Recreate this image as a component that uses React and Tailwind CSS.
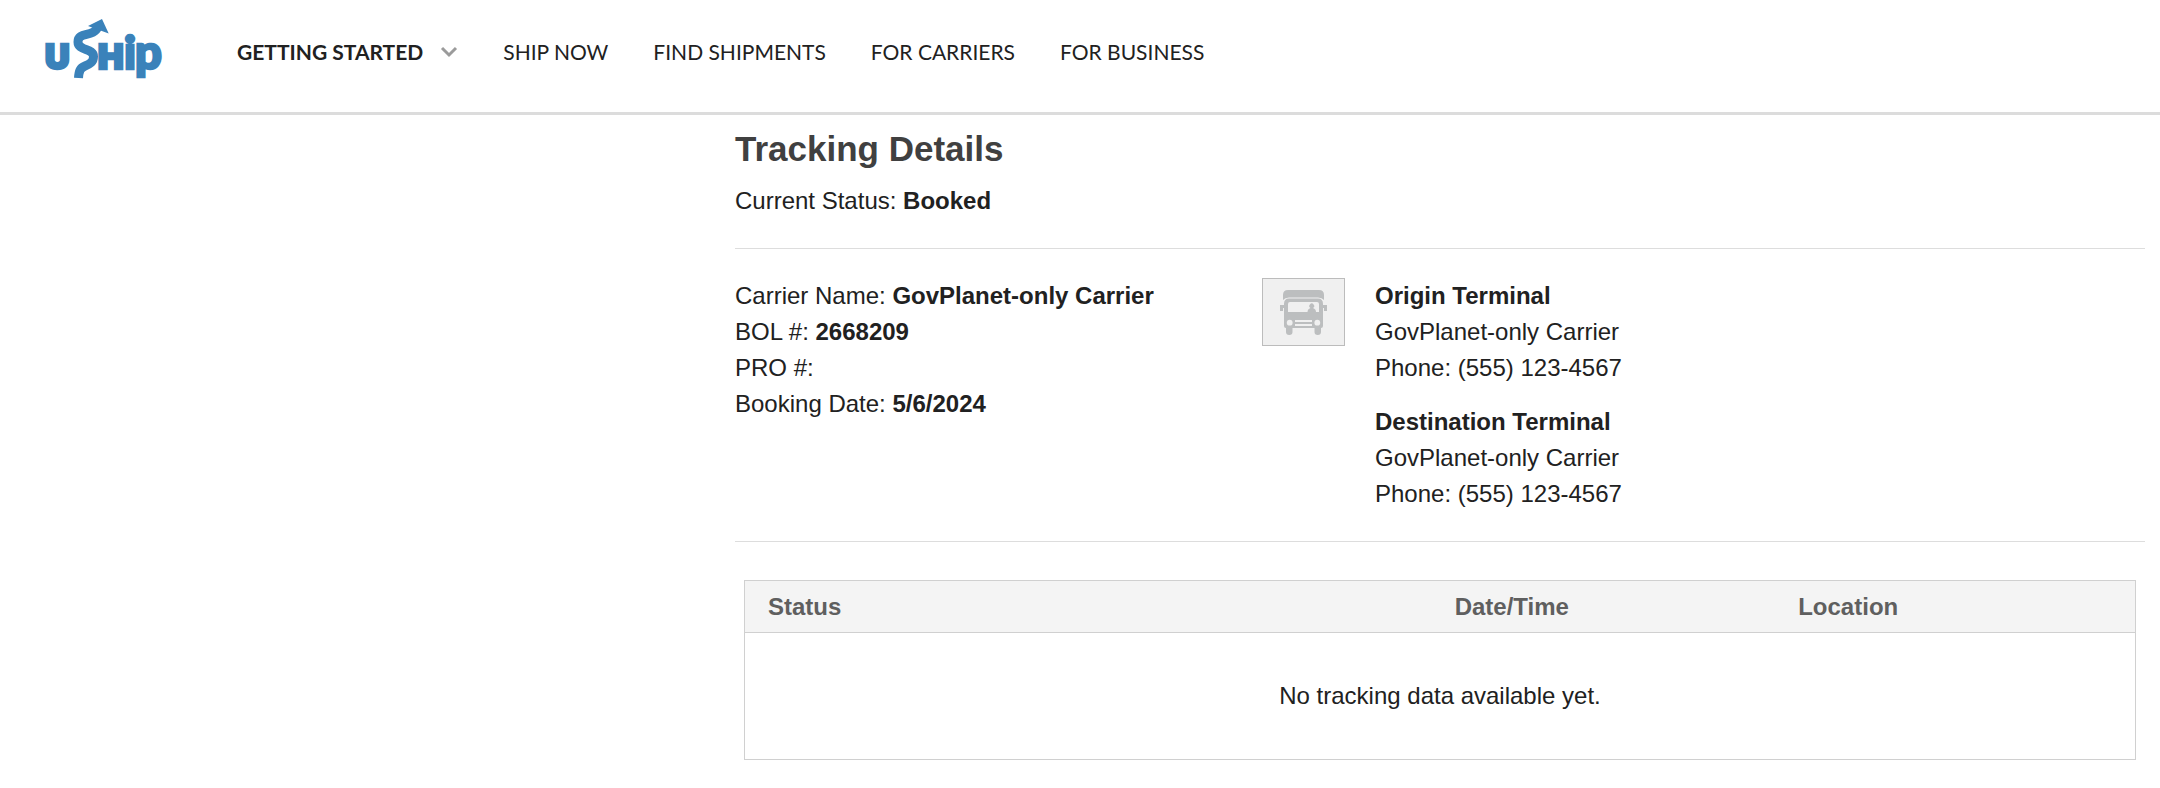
import React from "react";

const links = ["SHIP NOW", "FIND SHIPMENTS", "FOR CARRIERS", "FOR BUSINESS"];

const details = [
  ["Carrier Name:", "GovPlanet-only Carrier"],
  ["BOL #:", "2668209"],
  ["PRO #:", ""],
  ["Booking Date:", "5/6/2024"],
];

const terminals = ["Origin Terminal", "Destination Terminal"];

function Logo() {
  return (
    <svg
      width="120"
      height="64"
      viewBox="0 0 120 64"
      fill="#3a82ba"
      stroke="#3a82ba"
      className="font-['Lato',sans-serif] font-black"
      role="img"
      aria-label="uShip"
    >
      <g strokeWidth="2.6">
        <text x="1" y="53" fontSize="34" className="font-['Inter',sans-serif]">U</text>
        <text x="54" y="53" fontSize="34" className="font-['Inter',sans-serif]">H</text>
        <text x="80" y="53" fontSize="46">i</text>
        <text x="91" y="53" fontSize="47">p</text>
      </g>
      <path
        d="M34.500 62C35 55 36 52 41 50C46 48 49.500 46 49.500 40.500C49.500 32 34 35 34 26C34 15 49 22 54 11"
        fill="none"
        strokeWidth="9"
      />
      <path d="M44 10L58 3L64.700 17.500Z" stroke="none" />
    </svg>
  );
}

function TruckIcon() {
  return (
    <svg width="47" height="47" viewBox="0 0 47 47" fill="#bcbebf" aria-hidden="true">
      <path d="M3 11V6Q3 1 8 1H39Q44 1 44 6V11Q42 8.500 38 8.500H9Q5 8.500 3 11Z" />
      <path
        fillRule="evenodd"
        d="M9 9.500H38Q43 9.500 43 15V37Q43 39 41 39H6Q4 39 4 37V15Q4 9.500 9 9.500ZM10 13Q8 13 8 15V23H39V15Q39 13 37 13Z"
      />
      <path d="M0 16H4V19H3V22H0ZM43 16H47V22H44V19H43ZM6 38H12.500V43Q12.500 46 9.250 46Q6 46 6 43ZM34.500 38H41V43Q41 46 37.750 46Q34.500 46 34.500 43ZM27.500 23Q27.500 20 30.500 19A2.400 2.400 0 1 1 33 19Q36 20 36 23Z" />
      <path d="M15 32H32M15 36H32" stroke="#f0f0f0" strokeWidth="1.800" />
      <circle cx="9.700" cy="33.700" r="2.900" fill="#f0f0f0" />
      <circle cx="37.300" cy="33.700" r="2.900" fill="#f0f0f0" />
    </svg>
  );
}

export default function App() {
  return (
    <div className="min-h-screen bg-white font-['Liberation_Sans',Arial,sans-serif] text-2xl leading-9 text-[#212121]">
      <header className="flex h-[115px] items-start border-b-3 border-[#dcdcdc] pt-4 pl-11 font-['Lato',sans-serif] text-[21px]">
        <a href="#home" className="block">
          <Logo />
        </a>
        <nav className="ml-[73px] flex items-center gap-[45px] pt-[18px]">
          <button type="button" className="flex items-center gap-[17px] font-bold">
            GETTING STARTED
            <svg width="18" height="12" viewBox="0 0 18 12" fill="none" stroke="#9b9b9b" strokeWidth="3" aria-hidden="true">
              <path d="M2 2L9 9L16 2" />
            </svg>
          </button>
          {links.map((link) => (
            <a key={link} href="#nav">{link}</a>
          ))}
        </nav>
      </header>

      <main className="pt-3.5 pr-[15px] pl-[735px]">
        <h1 className="text-[35px] leading-10 font-bold text-[#404040]">Tracking Details</h1>
        <p className="mt-3.5">
          Current Status: <strong>Booked</strong>
        </p>

        <section className="mt-[29px] flex items-start border-y border-[#dddddd] py-[29px]">
          <div className="w-[527px]">
            {details.map(([label, value]) => (
              <p key={label}>
                {label} <strong>{value}</strong>
              </p>
            ))}
          </div>
          <div className="flex h-17 w-[83px] items-center justify-center border border-[#bcbcbc] bg-[#f0f0f0]">
            <TruckIcon />
          </div>
          <div className="ml-[30px] flex flex-col gap-[18px]">
            {terminals.map((terminal) => (
              <div key={terminal}>
                <h2 className="font-bold">{terminal}</h2>
                <p>GovPlanet-only Carrier</p>
                <p>Phone: (555) 123-4567</p>
              </div>
            ))}
          </div>
        </section>

        <div className="px-[9px] pt-[38px] pb-7">
          <table className="w-full table-fixed border-collapse border border-[#d0d0d0]">
            <thead>
              <tr className="border-b border-[#d0d0d0] bg-[#f4f4f4] text-left text-[#5f5f5f]">
                <th className="w-[49.4%] px-[23px] pt-2 pb-[7px]">Status</th>
                <th className="w-[24.7%] px-[23px] pt-2 pb-[7px]">Date/Time</th>
                <th className="px-[23px] pt-2 pb-[7px]">Location</th>
              </tr>
            </thead>
            <tbody>
              <tr>
                <td colSpan={3} className="py-[45px] text-center">No tracking data available yet.</td>
              </tr>
            </tbody>
          </table>
        </div>
      </main>
    </div>
  );
}
